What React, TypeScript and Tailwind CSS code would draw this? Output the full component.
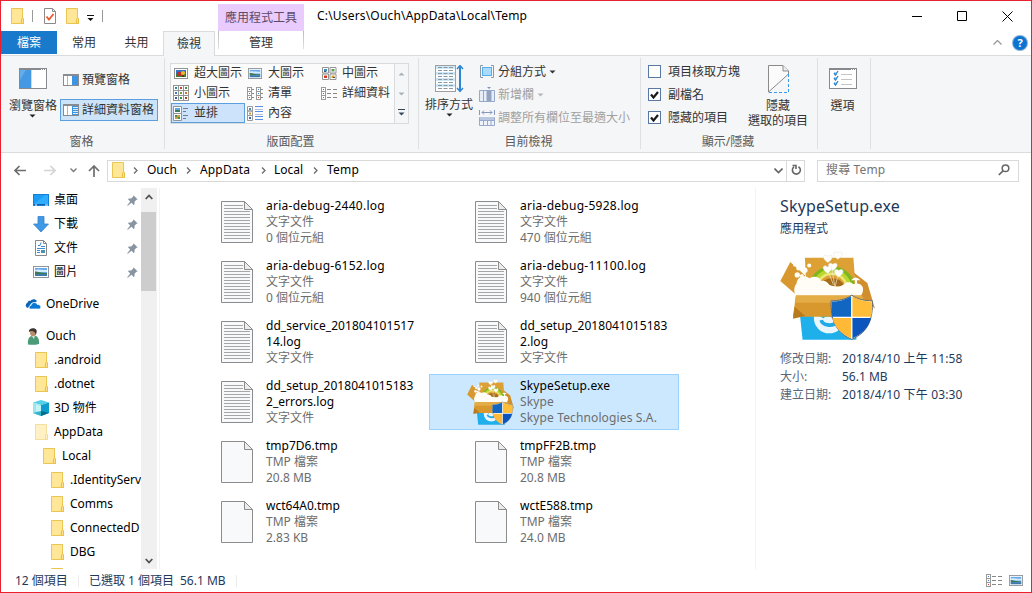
import React from "react";

type P = { className?: string };

const Folder = ({ className = "", pale = false }: P & { pale?: boolean }) => (
  <svg width="13" height="16" viewBox="0 0 13 16" className={"shrink-0 " + className} opacity={pale ? 0.55 : 1}>
    <path d="M.5.5h11v10h1v5H.5z" fill="#ffe38f" stroke="#eac54f" />
    <path d="M1 1h10v9L8 15H1z" fill="#ffe797" />
    <path d="M10.5 15.5v-4.500l1-.8 1 .8v4.500z" fill="#ffe38f" stroke="#e6bd3f" strokeWidth=".9" />
  </svg>
);

const Down = ({ className = "text-[#222]" }: P) => (
  <svg width="7" height="4" viewBox="0 0 7 4" className={"shrink-0 " + className}>
    <path d="M.5.5h6L3.500 3.500z" fill="currentColor" />
  </svg>
);

const Photo = ({ className = "", big = false }: P & { big?: boolean }) => (
  <svg width={big ? 16 : 14} height={big ? 12 : 11} viewBox="0 0 16 12" preserveAspectRatio="none" className={"shrink-0 " + className}>
    <rect x=".5" y=".5" width="15" height="11" fill="#fff" stroke="#8f9499" />
    <path d="M2 2h12v8H2z" fill="#68a9ec" />
    <path d="M2 4c3-1.500 7 .5 12 0v2H2z" fill="#d7ecfb" />
    <path d="M2 5.500c3 0 5 1.500 12 1.500v1H2z" fill="#41784e" />
    <path d="M2 8h12v2H2z" fill="#3e79ac" />
  </svg>
);

const PhotoXL = () => (
  <svg width="14" height="11" viewBox="0 0 14 11">
    <rect x=".5" y=".5" width="13" height="10" fill="#fff" stroke="#8f9499" />
    <path d="M2 2h10v7H2z" fill="#3b6fc4" />
    <path d="M2 6h10v3H2z" fill="#3f7a34" />
    <path d="M3 4h4v4H3z" fill="#b8322b" />
    <circle cx="9" cy="5" r="2.100" fill="#f0b82e" />
    <path d="M8 7h2v2H8z" fill="#6d3514" />
  </svg>
);

const Medium = () => (
  <svg width="15" height="13" viewBox="0 0 15 13" fill="#fff" stroke="#949494">
    <path d="M.5.5h6v5.500h-6zM8 .5h6v5.500H8zM.5 7h6v5.500h-6zM8 7h6v5.500H8z" />
    <g stroke="none">
      <path d="M2 2h3v2.500H2z" fill="#3c8fbf" /><path d="M9.500 2h3v2.500h-3z" fill="#5a9e58" />
      <path d="M2 8.500h3V11H2z" fill="#d23c22" /><path d="M9.500 8.500h3V11h-3z" fill="#d99c24" />
      <path d="M2 4h2v1H2zM11 10h2v1h-2z" fill="#34546b" />
    </g>
  </svg>
);

const Small = () => (
  <svg width="16" height="16" viewBox="0 0 16 16">
    {[0, 1, 2].map((r) => [0, 1, 2].map((c) => (
      <g key={r + "-" + c}>
        <rect x={c * 5 + 0.5} y={r * 5 + 0.5} width="5" height="5" fill="#fff" stroke="#949494" />
        <rect x={c * 5 + 2} y={r * 5 + 2} width="2" height="2" fill={["#2b8a9c", "#c4472d", "#4a8a3c", "#3b7ac0", "#7a9a34", "#d06c28", "#355f9c", "#3f8b4b", "#b23b30"][r * 3 + c]} />
      </g>
    )))}
  </svg>
);

const SmallCells = ({ x }: { x: number }) => (
  <g>
    {[0, 1, 2].map((r) => (
      <g key={r}>
        <rect x={x + 0.5} y={r * 4 + 0.5} width="4" height="4" fill="#fff" stroke="#999" />
        <rect x={x + 2} y={r * 4 + 2} width="1" height="1" fill={["#347fc4", "#3977c8", "#cf3d36"][r]} />
      </g>
    ))}
  </g>
);

const ListIcon = () => (
  <svg width="16" height="13" viewBox="0 0 16 13">
    <SmallCells x={0} /><SmallCells x={9} />
    <path d="M5 2.500h2M5 6.500h2M5 10.500h2M14 2.500h2M14 6.500h2M14 10.500h2" stroke="#888" />
  </svg>
);

const DetailIcon = () => (
  <svg width="16" height="13" viewBox="0 0 16 13" className="shrink-0">
    <SmallCells x={0} />
    <path d="M6 2.500h4M12 2.500h4M6 6.500h4M12 6.500h4M6 10.500h4M12 10.500h4" stroke="#888" />
  </svg>
);

const TilesIcon = () => (
  <svg width="16" height="15" viewBox="0 0 16 15">
    <path d="M.5.5h8v7h-8zM.5 7.500h8v7h-8z" fill="#fff" stroke="#949494" />
    <path d="M2 2h5v4H2z" fill="#5fa8da" /><path d="M2 4h5v2H2z" fill="#3d7d63" />
    <path d="M2 9h5v4H2z" fill="#cf9b3a" /><path d="M2 9h2v2H2zM5 11h2v2H5z" fill="#4b934b" />
    <path d="M10 2.500h5M10 5.500h3M10 9.500h5M10 12.500h3" stroke="#6e7f92" />
  </svg>
);

const ContentIcon = () => (
  <svg width="16" height="15" viewBox="0 0 16 15">
    <path d="M.5.500h5v4.500h-5zM.5 5h5v4.500h-5zM.5 9.500h5v5h-5z" fill="#fff" stroke="#999" />
    <path d="M2 2h2v2H2z" fill="#3f8fb8" /><path d="M2 6.500h2v2H2z" fill="#c9973a" /><path d="M2 11h2v2H2z" fill="#356cb0" />
    <path d="M8 .5h8M8 5.500h8M8 10.500h8M8 13.500h8" stroke="#5a8fe6" /><path d="M8 3.500h8M8 8.500h8" stroke="#b6c4dc" />
  </svg>
);

const NavPane = () => (
  <svg width="28" height="21" viewBox="0 0 28 21">
    <rect x=".5" y=".5" width="27" height="20" fill="#fff" stroke="#868a8e" />
    <path d="M1 1h26v1H1z" fill="#868a8e" /><path d="M22 1h1v1h-1zM24 1h1v1h-1zM26 1h1v1h-1z" fill="#fff" />
    <path d="M1 2h11v18H1z" fill="#4499e2" /><path d="M1 2h6L1 12z" fill="#62adea" />
    <path d="M12 2h1v18h-1z" fill="#d8d8d8" />
  </svg>
);

const SidePane = ({ lines = false }: { lines?: boolean }) => (
  <svg width="16" height="12" viewBox="0 0 16 12" className="shrink-0">
    <rect x=".5" y=".5" width="15" height="11" fill="#fff" stroke="#888c90" />
    <path d="M0 0h16v2H0z" fill="#888c90" />
    <path d="M4.500 2v9" stroke="#b5b5b5" />
    <path d="M9 2h6v9H9z" fill="#3d95e2" />
    {lines && <path d="M10 3.500h5M10 5.500h5M10 7.500h5M10 9.500h5" stroke="#d9edfc" />}
  </svg>
);

const SortIcon = () => (
  <svg width="29" height="28" viewBox="0 0 29 28">
    <rect x=".5" y=".5" width="20" height="26" fill="#fff" stroke="#a0a0a0" />
    <path d="M1 1h19v3H1zM1 7h19v3H1zM1 13h19v3H1zM1 19h19v3H1z" fill="#cde8f7" />
    {[2.5, 5.5, 8.5, 11.5, 14.5, 17.5, 20.5, 23.5].map((y) => (
      <path key={y} d={`M3 ${y}h4M8.500 ${y}h4M14 ${y}h4`} stroke="#8f979e" />
    ))}
    <path d="M25 2v23" stroke="#2d86d1" strokeWidth="2" />
    <path d="M22 4l3-3.500 3 3.500M22 23l3 3.500 3-3.500" stroke="#2d86d1" strokeWidth="1.400" fill="none" />
  </svg>
);

const GroupIcon = () => (
  <svg width="14" height="13" viewBox="0 0 14 13" className="shrink-0">
    <path d="M3 .5H.5v12H3M11 .5h2.500v12H11" fill="none" stroke="#8b98a5" />
    <rect x="2.500" y="2.500" width="9" height="8" fill="#a9dbff" stroke="#59aeea" />
  </svg>
);

const AddCol = () => (
  <svg width="16" height="15" viewBox="0 0 16 15" className="shrink-0">
    <path d="M.5 3.500h15v11H.5z" fill="#e8eef8" stroke="#98a8ca" />
    <path d="M4.500 3v11M8 3v11M12 3v11" stroke="#98a8ca" /><path d="M8 3h4v11H8z" fill="#93a3c4" />
    <path d="M8 0h4l-2 2z" fill="#7f90b5" />
  </svg>
);

const FitCol = () => (
  <svg width="16" height="16" viewBox="0 0 16 16" className="shrink-0">
    <path d="M.5 0v5M15.500 0v5M3 2.500h10M5 .5l-2 2 2 2M11 .5l2 2-2 2" stroke="#8497be" fill="none" />
    <path d="M.5 7.500h15v8H.5z" fill="#eff3fa" stroke="#98a8ca" /><path d="M1 7h14v3H1z" fill="#bac7e0" />
    <path d="M4.500 10v5M8.500 10v5M12 10v5M1 10.500h14" stroke="#98a8ca" />
  </svg>
);

const HideIcon = () => (
  <svg width="21" height="28" viewBox="0 0 21 28">
    <path d="M.5.5H15l5.500 5.500v3L.5 27z" fill="#fbfbfb" stroke="#8b8b8b" />
    <path d="M15 .5V6h5.500" fill="#eee" stroke="#8b8b8b" />
    <path d="M20.500 9v18.500H1" fill="none" stroke="#3a98e8" strokeDasharray="3 2" />
  </svg>
);

const OptionsIcon = () => (
  <svg width="28" height="21" viewBox="0 0 28 21">
    <rect x=".5" y=".5" width="27" height="20" fill="#fff" stroke="#868a8e" />
    <path d="M1 0h26v2H1z" fill="#868a8e" /><path d="M22 1h1v1h-1zM24 1h1v1h-1zM26 1h1v1h-1z" fill="#fff" />
    {[5, 10, 15].map((y) => (
      <g key={y}>
        <rect x="5" y={y - 1} width="3" height="3" fill="#b8ddf7" />
        <path d={`M5 ${y}l1.500 2L9 ${y - 2}`} fill="none" stroke="#2f86d3" strokeWidth="1.300" />
        <path d={`M12 ${y + 1.5}h11`} stroke="#c4c4c4" />
      </g>
    ))}
  </svg>
);

const Chev = ({ className = "" }: P) => (
  <svg width="5" height="7" viewBox="0 0 5 7" className={"shrink-0 " + className}>
    <path d="M1 .5l3 3-3 3" fill="none" stroke="#6a6a6a" strokeWidth="1.300" />
  </svg>
);

const Pin = () => (
  <svg width="11" height="11" viewBox="0 0 11 11" className="ml-auto shrink-0">
    <path d="M6.500.3l4.200 4.200-1.300.3-1.900 2 .1 2.300-.9.900-2.200-2.200L.7 10.700l-.5-.5 3-3.700L1 4.300l.9-.9 2.300.1 2-1.900z" fill="#8695a1" />
  </svg>
);

const Page = ({ lined = false }: { lined?: boolean }) => (
  <svg width="32" height="42" viewBox="0 0 32 42" className="shrink-0">
    <path d="M.5.5H23.500l8 8v33H.5z" fill="#f8f9fa" stroke="#8c8c8c" />
    {lined && (
      <g stroke="#a6a6a6">
        <path d="M3 4.500h19M3 7.500h19" />
        {[10.5, 13.5, 16.5, 19.5, 22.5, 25.5, 28.5, 31.5, 34.5, 37.5].map((y) => <path key={y} d={`M3 ${y}h26`} />)}
      </g>
    )}
    <path d="M23.500.5v8h8z" fill="#ececec" stroke="#8c8c8c" />
  </svg>
);

const SetupBox = ({ w, h, className = "" }: P & { w: number; h: number }) => (
  <svg width={w} height={h} viewBox="60 198 286 268" preserveAspectRatio="none" className={"shrink-0 " + className}>
    <path d="M120 390h170v75H128z" fill="#1fb0ec" />
    <circle cx="208" cy="400" r="46" fill="#e9f6fd" />
    <path d="M184 406c4 16 34 20 44 8M222 396c-8-10-30-8-36 2" fill="none" stroke="#1fa9e6" strokeWidth="11" />
    <path d="M91 231l44 40 4 60-28 1-50-44z" fill="#d9982f" />
    <path d="M135 218h146l8 110H140z" fill="#dda034" />
    <path d="M281 262l42 32 23 78-40-35z" fill="#d08f2c" />
    <path d="M152 300a66 66 0 0 1 128 0" fill="none" stroke="#7fb51e" strokeWidth="12" />
    <path d="M162 302a55 55 0 0 1 108 0" fill="none" stroke="#b9d72e" strokeWidth="10" />
    <path d="M171 303a46 46 0 0 1 90 0" fill="none" stroke="#e8ea72" strokeWidth="8" />
    <path d="M178 305a42 42 0 0 1 77 0z" fill="#a56b18" />
    <path d="M217 258l8 45M236 265l-10 40M203 255l18 45" stroke="#f4ead2" strokeWidth="2" />
    <g fill="#fffefa" stroke="#e2e2e2" strokeWidth="1.500">
      {[[204, 219], [234, 209], [219, 243], [237, 262], [203, 251]].map(([x, y]) => (
        <path key={x} d={`M${x} ${y + 14}c-22-14-12-29 0-19 12-10 22 5 0 19z`} />
      ))}
    </g>
    <g fill="#fffdf5">
      <circle cx="104" cy="241" r="4" /><circle cx="115" cy="251" r="6" /><circle cx="128" cy="237" r="6" /><circle cx="135" cy="256" r="8" />
      <circle cx="148" cy="242" r="6" /><circle cx="112" cy="270" r="8" /><circle cx="126" cy="273" r="6" />
      <path d="M108 334c-8-12-6-30 2-38 0-18 22-30 38-16 12-8 30-6 36 8 12-2 20 4 24 12 14 6 34 8 44-2 8-8 22-8 28 0 18-6 32 4 30 18-2 12-4 14-12 18z" />
      <path d="M274 286q14-16 28 0h-10v16h-6v-16z" />
    </g>
    <path d="M108 332h198l14 16 20 24-16 24H99z" fill="#d8982e" />
    <path d="M108 332h200l4 22H104z" fill="#e4ac44" />
    <path d="M104 366l32 28-37 8z" fill="#b87a1d" />
    <path d="M276 331c18 13 40 17 62 17 2 55-12 94-62 116-50-22-64-61-62-116 22 0 44-4 62-17z" fill="#fff" stroke="#5d6770" strokeWidth="3" />
    <path d="M274 334v62h-57c-2-16-2-31-1-46 22 0 41-5 58-16z" fill="#1166c2" />
    <path d="M278 334v62h57c2-16 2-31 1-46-22 0-41-5-58-16z" fill="#ffbd38" />
    <path d="M274 400v61c-31-13-50-34-56-61z" fill="#ffb936" />
    <path d="M278 400v61c31-13 50-34 56-61z" fill="#0b55bd" />
  </svg>
);

const Desktop = () => (
  <svg width="16" height="13" viewBox="0 0 16 13">
    <path d="M0 0h16v12H0z" fill="#1480d8" /><path d="M1 1h14v9H1z" fill="#1b9cf6" /><path d="M1 10L12 1h3v9z" fill="#31adff" />
    <path d="M1 10h14v1H1z" fill="#0d60ad" /><path d="M2 11h2M12 11h3" stroke="#fff" />
  </svg>
);
const Download = () => (
  <svg width="16" height="17" viewBox="0 0 16 17"><path d="M5 .5h6V8h4.500L8 16 .5 8H5z" fill="#4099e5" stroke="#2e83d2" strokeWidth=".8" /></svg>
);
const Doc = () => (
  <svg width="12" height="16" viewBox="0 0 12 16">
    <path d="M.5.5h8l3 3v12H.5z" fill="#fff" stroke="#888" /><path d="M8.500.5v3h3" fill="none" stroke="#888" />
    <path d="M3 5.500h2l1-3M6 6.500h4M2 8.500h8M2 10.500h3M2 12.500h3" stroke="#3a8dd0" fill="none" /><path d="M6 10h4v3H6z" fill="#4b8fae" />
  </svg>
);
const Cloud = () => (
  <svg width="16" height="10" viewBox="0 0 16 10">
    <path d="M3 9a2.700 2.700 0 0 1-.5-5.200C2.800 2 4.500 1.500 5.500 2 6.500 0 10.500-.8 12 2.500L6.500 4z" fill="#0a64b8" />
    <path d="M5.500 10C3.500 9.500 3.800 6.500 6 6.500 6.500 3 11 2.500 12.300 5.500c2-.3 3.700 1 3.500 2.700-.2 1-.8 1.800-1.800 1.800z" fill="#0b78d4" stroke="#fff" strokeWidth=".7" />
  </svg>
);
const User = () => (
  <svg width="13" height="17" viewBox="0 0 13 17">
    <path d="M1 16.500C.5 12 2 8 5 8l3-.5c3 1 4.500 4 4 8.500-3 1-8 1-11 .5z" fill="#4b9b76" />
    <path d="M4 7l3 4 1-4z" fill="#e8e8e8" /><ellipse cx="6" cy="4.500" rx="3" ry="3.800" fill="#b98e6c" />
    <path d="M2 4C1 0 8-1 9.500 2c.5 1.500 0 4-1 5C8.500 4.500 7 3 4 3z" fill="#3c3633" />
  </svg>
);
const Cube = () => (
  <svg width="16" height="16" viewBox="0 0 16 16">
    <path d="M0 2.500L8 0l8 2.500L8 5z" fill="#55d0e6" /><path d="M0 2.500L8 5v11l-8-3z" fill="#9be6f0" /><path d="M16 2.500L8 5v11l8-3z" fill="#0d9ccb" />
    <path d="M3 4.500L8 6v7l-5-2z" fill="#c7f2f6" /><path d="M8 16v-5l8 2z" fill="#056d8a" /><path d="M0 13l8-2v5z" fill="#33b5cc" />
  </svg>
);

const Check = ({ on = false, label }: { on?: boolean; label: string }) => (
  <div className="flex h-[23px] items-center">
    <span className="mr-[7px] flex h-[13px] w-[13px] items-center justify-center border border-[#5a78a6] bg-white">
      {on && <svg width="9" height="8" viewBox="0 0 9 8"><path d="M1 3.500l2.500 3L8 1" fill="none" stroke="#1a1a1a" strokeWidth="2.200" /></svg>}
    </span>
    {label}
  </div>
);

const GalleryItem = ({ icon, label, on = false }: { icon: React.ReactNode; label: string; on?: boolean }) => (
  <div className={"flex h-5 items-center border pl-px " + (on ? "border-[#5a9fe0] bg-[#cce3fb]" : "border-transparent")}>
    <span className="flex w-[16px] justify-center">{icon}</span>
    <span className="ml-[5px]">{label}</span>
  </div>
);

const GroupLabel = ({ children }: { children: React.ReactNode }) => (
  <div className="mt-auto h-[15px] pr-[2px] text-center text-[#5a5a5a]">{children}</div>
);

const NavRow = ({ pad, icon, label, pin = false, gap = false }: { pad: string; icon: React.ReactNode; label: string; pin?: boolean; gap?: boolean }) => (
  <div className={"flex h-6 shrink-0 items-center pr-[3px] " + pad + (gap ? " mt-2" : "")}>
    <span className="mr-[5px] flex w-4 shrink-0 justify-center">{icon}</span>
    <span>{label}</span>
    {pin && <Pin />}
  </div>
);

const files: { name: string[]; info: string[]; kind: "log" | "tmp" | "exe"; track?: string }[] = [
  { name: ["aria-debug-2440.log"], info: ["文字文件", "0 個位元組"], kind: "log", track: "tracking-[0.26px]" },
  { name: ["aria-debug-5928.log"], info: ["文字文件", "470 個位元組"], kind: "log", track: "tracking-[0.26px]" },
  { name: ["aria-debug-6152.log"], info: ["文字文件", "0 個位元組"], kind: "log", track: "tracking-[0.26px]" },
  { name: ["aria-debug-11100.log"], info: ["文字文件", "940 個位元組"], kind: "log", track: "tracking-[0.26px]" },
  { name: ["dd_service_201804101517", "14.log"], info: ["文字文件"], kind: "log", track: "tracking-[0.05px]" },
  { name: ["dd_setup_2018041015183", "2.log"], info: ["文字文件"], kind: "log", track: "tracking-[0.05px]" },
  { name: ["dd_setup_2018041015183", "2_errors.log"], info: ["文字文件"], kind: "log", track: "tracking-[0.05px]" },
  { name: ["SkypeSetup.exe"], info: ["Skype", "Skype Technologies S.A."], kind: "exe", track: "tracking-[0.13px]" },
  { name: ["tmp7D6.tmp"], info: ["TMP 檔案", "20.8 MB"], kind: "tmp" },
  { name: ["tmpFF2B.tmp"], info: ["TMP 檔案", "20.8 MB"], kind: "tmp" },
  { name: ["wct64A0.tmp"], info: ["TMP 檔案", "2.83 KB"], kind: "tmp" },
  { name: ["wctE588.tmp"], info: ["TMP 檔案", "24.0 MB"], kind: "tmp" },
];

export default function App() {
  return (
    <div className="flex h-[593px] w-[1032px] flex-col overflow-hidden whitespace-nowrap border border-[#e9202f] bg-white font-['Noto_Sans','Noto_Sans_CJK_TC',sans-serif] text-[12px] leading-4 text-[#333]">
      {/* title bar */}
      <div className="flex h-[30px] shrink-0 items-center pl-[10px] pr-[18px]">
        <Folder />
        <i className="ml-2 h-3 w-px bg-[#999]" />
        <svg width="12" height="16" viewBox="0 0 12 16" className="ml-[11px]">
          <path d="M.5.500h8l3 3v12H.5z" fill="#fff" stroke="#8a8a8a" /><path d="M8.500.5v3h3" fill="none" stroke="#8a8a8a" />
          <path d="M2.500 8.500l2.500 3 4.500-5.500" fill="none" stroke="#e8592b" strokeWidth="1.800" />
        </svg>
        <Folder className="ml-[10px]" />
        <svg width="7" height="6" viewBox="0 0 7 6" className="ml-2 mt-1"><path d="M0 0h7v1H0zM.5 3h6l-3 3z" fill="#111" /></svg>
        <i className="ml-2 h-3 w-px bg-[#999]" />
        <div className="ml-[115px] mt-[3px] flex h-[27px] w-[86px] items-center justify-center bg-[#e9cbfd] text-[#5b4a66]">應用程式工具</div>
        <span className="ml-[13px] tracking-[0.18px] text-black">C:\Users\Ouch\AppData\Local\Temp</span>
        <svg width="101" height="11" viewBox="0 0 101 11" className="ml-auto" fill="none" stroke="#000">
          <path d="M0 5.500h10M45.500.5h9v9h-9zM90.500.5l10 10M100.500.5l-10 10" />
        </svg>
      </div>
      {/* tabs */}
      <div className="flex h-6 shrink-0 text-[#333]">
        <div className="flex h-[23px] w-14 items-center justify-center bg-[#1979ca] text-white">檔案</div>
        <div className="flex h-[23px] w-[53px] items-center justify-center pl-px">常用</div>
        <div className="flex h-[23px] w-[53px] items-center justify-center">共用</div>
        <div className="z-10 flex h-[25px] w-[52px] items-center justify-center border border-b-0 border-[#dadbdc] bg-[#f5f6f7] pb-px">檢視</div>
        <div className="ml-[3px] flex h-[23px] w-[86px] justify-between">
          <i className="h-[18px] w-px bg-linear-to-b from-[#bbb] to-[#e4e4e4]" />
          <span className="self-center">管理</span>
          <i className="h-[18px] w-px bg-linear-to-b from-[#bbb] to-[#e4e4e4]" />
        </div>
        <svg width="9" height="5" viewBox="0 0 9 5" className="ml-auto mt-[9px]"><path d="M.5 4.500l4-4 4 4" fill="none" stroke="#999" strokeWidth="1.300" /></svg>
        <span className="ml-[11px] mr-[4px] mt-[5px] flex h-[14px] w-[14px] items-center justify-center rounded-full bg-[#0b74d1] text-[11px] font-bold text-white ring-1 ring-[#3a7db8]/60">?</span>
      </div>
      {/* ribbon */}
      <div className="flex h-[98px] shrink-0 border-y border-[#dadbdc] bg-[#f5f6f7] pb-[3px] pt-[2px]">
        <div className="flex w-[164px] flex-col border-r border-[#dfe0e1]">
          <div className="flex">
            <div className="flex w-[58px] flex-col items-center pl-[5px] pt-[10px]">
              <NavPane />
              <span className="ml-px mt-[9px]">瀏覽窗格</span>
              <Down />
            </div>
            <div className="ml-px pt-[10px]">
              <div className="flex h-[23px] items-center gap-[3px] pl-[3px]"><SidePane />預覽窗格</div>
              <div className="mt-2 flex h-[22px] w-[98px] items-center gap-[3px] border border-[#5a9fe0] bg-[#cce3f8] pl-[2px]"><SidePane lines />詳細資料窗格</div>
            </div>
          </div>
          <GroupLabel>窗格</GroupLabel>
        </div>

        <div className="flex w-[254px] flex-col border-r border-[#dfe0e1]">
          <div className="ml-[5px] mt-[5px] flex h-[61px] w-[239px] border border-[#dadbdc] bg-[#fbfbfc]">
            <div className="-mt-px grid w-[223px] grid-cols-[74px_74px_75px] content-start">
              <GalleryItem icon={<PhotoXL />} label="超大圖示" />
              <GalleryItem icon={<Photo />} label="大圖示" />
              <GalleryItem icon={<Medium />} label="中圖示" />
              <GalleryItem icon={<Small />} label="小圖示" />
              <GalleryItem icon={<ListIcon />} label="清單" />
              <GalleryItem icon={<DetailIcon />} label="詳細資料" />
              <GalleryItem icon={<TilesIcon />} label="並排" on />
              <GalleryItem icon={<ContentIcon />} label="內容" />
            </div>
            <div className="flex flex-1 flex-col items-center border-l border-[#dadbdc] bg-[#f5f6f7]">
              <Down className="mt-2 rotate-180 text-[#a8b0ba]" />
              <Down className="mt-4 text-[#a8b0ba]" />
              <i className="mt-[13px] h-px w-[7px] bg-[#33475c]" />
              <Down className="mt-[2px] text-[#33475c]" />
            </div>
          </div>
          <GroupLabel>版面配置</GroupLabel>
        </div>

        <div className="flex w-[222px] flex-col border-r border-[#dfe0e1]">
          <div className="flex">
            <div className="flex w-[60px] flex-col items-center pt-[7px]">
              <SortIcon />
              <span className="mt-1">排序方式</span>
              <Down />
            </div>
            <div className="pt-[2px] text-[#a0a0a0]">
              <div className="flex h-[23px] items-center text-[#333]"><span className="mr-[3px] flex w-4 justify-center"><GroupIcon /></span>分組方式<Down className="ml-[3px]" /></div>
              <div className="flex h-[23px] items-center"><span className="mr-[3px]"><AddCol /></span>新增欄<Down className="ml-[3px] text-[#b5b5b5]" /></div>
              <div className="flex h-[23px] items-center"><span className="mr-[3px]"><FitCol /></span>調整所有欄位至最適大小</div>
            </div>
          </div>
          <GroupLabel>目前檢視</GroupLabel>
        </div>

        <div className="flex w-[177px] flex-col border-r border-[#dfe0e1]">
          <div className="flex">
            <div className="w-[107px] pl-[7px] pt-[2px]">
              <Check label="項目核取方塊" />
              <Check on label="副檔名" />
              <Check on label="隱藏的項目" />
            </div>
            <div className="flex w-[60px] flex-col items-center pt-[7px] leading-[15px]">
              <HideIcon />
              <span className="mt-[5px]">隱藏</span>
              <span>選取的項目</span>
            </div>
          </div>
          <GroupLabel>顯示/隱藏</GroupLabel>
        </div>

        <div className="flex w-[53px] flex-col items-center border-r border-[#dfe0e1] pr-[3px] pt-[10px]">
          <OptionsIcon />
          <span className="mt-[9px]">選項</span>
        </div>
      </div>
      {/* address bar */}
      <div className="flex h-[35px] shrink-0 items-center pl-[13px] text-black">
        <svg width="12" height="11" viewBox="0 0 12 11"><path d="M12 5.500H1M5.500 1L1 5.500 5.500 10" fill="none" stroke="#6e6e6e" strokeWidth="1.700" /></svg>
        <svg width="12" height="11" viewBox="0 0 12 11" className="ml-[18px]"><path d="M0 5.500h11M6.500 1L11 5.500 6.500 10" fill="none" stroke="#d4d4d4" strokeWidth="1.700" /></svg>
        <svg width="7" height="5" viewBox="0 0 7 5" className="ml-[14px]"><path d="M.5.500l3 3 3-3" fill="none" stroke="#777" strokeWidth="1.300" /></svg>
        <svg width="12" height="12" viewBox="0 0 12 12" className="ml-[11px]"><path d="M6 12V1M1 6l5-5 5 5" fill="none" stroke="#6e6e6e" strokeWidth="1.700" /></svg>
        <div className="ml-[7px] flex h-[22px] w-[698px] items-center border border-[#d9d9d9] pb-px pl-1">
          <Folder />
          <Chev className="ml-2" />
          <span className="ml-[9px] w-[32px]">Ouch</span>
          <Chev className="ml-[7px]" />
          <span className="ml-[9px] w-[54px] tracking-[0.15px]">AppData</span>
          <Chev className="ml-[7px]" />
          <span className="ml-[8px] w-[32px]">Local</span>
          <Chev className="ml-[7px]" />
          <span className="ml-[9px] tracking-[0.2px]">Temp</span>
          <svg width="9" height="6" viewBox="0 0 9 6" className="ml-auto mt-px"><path d="M.5.500l4 4 4-4" fill="none" stroke="#666" strokeWidth="1.600" /></svg>
          <i className="-mb-px ml-[3px] h-5 w-px bg-[#d9d9d9]" />
          <svg width="11" height="12" viewBox="0 0 11 12" className="ml-1 mr-[2px]"><path d="M7.500 2.700a4 4 0 1 1-4.500.2M1.500 1.500h3.500V5" fill="none" stroke="#666" strokeWidth="1.600" /></svg>
        </div>
        <div className="ml-3 flex h-[22px] w-[202px] items-center border border-[#d9d9d9] pb-px pl-2 pr-2 text-[#757575]">
          <span className="tracking-[0.15px]">搜尋 Temp</span>
          <svg width="12" height="12" viewBox="0 0 12 12" className="ml-auto"><circle cx="7.500" cy="4.300" r="3.300" fill="none" stroke="#666" strokeWidth="1.500" /><path d="M5 6.800L.8 11" stroke="#666" strokeWidth="1.700" /></svg>
        </div>
      </div>
      {/* body */}
      <div className="flex h-[381px] shrink-0 text-black">
        <div className="flex w-[140px] flex-col overflow-hidden">
          <NavRow pad="pl-8" icon={<Desktop />} label="桌面" pin />
          <NavRow pad="pl-8" icon={<Download />} label="下載" pin />
          <NavRow pad="pl-8" icon={<Doc />} label="文件" pin />
          <NavRow pad="pl-8" icon={<Photo big />} label="圖片" pin />
          <NavRow pad="pl-6" icon={<Cloud />} label="OneDrive" gap />
          <NavRow pad="pl-6" icon={<User />} label="Ouch" gap />
          <NavRow pad="pl-8" icon={<Folder />} label=".android" />
          <NavRow pad="pl-8" icon={<Folder />} label=".dotnet" />
          <NavRow pad="pl-8" icon={<Cube />} label="3D 物件" />
          <NavRow pad="pl-8" icon={<Folder pale />} label="AppData" />
          <NavRow pad="pl-10" icon={<Folder />} label="Local" />
          <NavRow pad="pl-12" icon={<Folder />} label=".IdentityServ" />
          <NavRow pad="pl-12" icon={<Folder />} label="Comms" />
          <NavRow pad="pl-12" icon={<Folder />} label="ConnectedD" />
          <NavRow pad="pl-12" icon={<Folder />} label="DBG" />
          <NavRow pad="pl-12" icon={<Folder />} label="" />
        </div>
        <div className="flex w-4 flex-col items-center bg-[#f0f0f0]">
          <svg width="8" height="6" viewBox="0 0 8 6" className="mt-[6px]"><path d="M.7 5L4 1.500 7.300 5" fill="none" stroke="#505050" strokeWidth="1.800" /></svg>
          <i className="mt-3 h-[79px] w-[15px] self-start bg-[#cdcdcd]" />
          <svg width="8" height="6" viewBox="0 0 8 6" className="mb-[5px] mt-auto"><path d="M.7 1L4 4.500 7.300 1" fill="none" stroke="#505050" strokeWidth="1.800" /></svg>
        </div>
        <i className="ml-[2px] w-px bg-[#f3f3f3]" />
        <div className="grid w-[596px] grid-cols-[250px_250px] grid-rows-[repeat(6,56px)] content-start gap-1 border-r border-[#f3f3f3] pl-[15px] pt-[6px]">
          {files.map((f, i) => (
            <div key={i} className={"flex border " + (f.kind === "exe" ? "border-[#99d1ff] bg-[#cce8ff] pl-[37px]" : "border-transparent pl-[45px]")}>
              {f.kind === "exe" ? <SetupBox w={47} h={46} className="mt-[4px]" /> : <span className="mt-[6px]"><Page lined={f.kind === "log"} /></span>}
              <div className={"pt-[3px] " + (f.kind === "exe" ? "ml-[6px]" : "ml-[13px]")}>
                {f.name.map((n) => <div key={n} className={f.track ?? ""}>{n}</div>)}
                {f.info.map((n) => <div key={n} className={"text-[#6d6d6d] " + (f.kind === "exe" ? "tracking-[0.13px]" : "")}>{n}</div>)}
              </div>
            </div>
          ))}
        </div>
        <div className="flex-1 pl-[24px] text-[#1e395b]">
          <div className="mt-[7px] text-[16px] leading-[22px] tracking-[0.15px]">SkypeSetup.exe</div>
          <div className="mt-[4px]">應用程式</div>
          <SetupBox w={95} h={89} className="mt-[14px]" />
          <dl className="mt-[10px] grid grid-cols-[62px_1fr] leading-[18px]">
            <dt className="text-[#5a6779]">修改日期:</dt><dd className="tracking-[0.15px]">2018/4/10 上午 11:58</dd>
            <dt className="text-[#5a6779]">大小:</dt><dd>56.1 MB</dd>
            <dt className="text-[#5a6779]">建立日期:</dt><dd className="tracking-[0.15px]">2018/4/10 下午 03:30</dd>
          </dl>
        </div>
      </div>
      {/* status bar */}
      <div className="flex h-[22px] items-center pl-[14px] pr-[8px] pt-px text-[#1e395b]">
        <span className="w-[63px]">12 個項目</span>
        <i className="h-3 w-px bg-[#ececec]" />
        <span className="ml-[10px] w-[91px]">已選取 1 個項目</span>
        <span className="w-[56px]">56.1 MB</span>
        <i className="h-3 w-px bg-[#ececec]" />
        <span className="ml-auto"><DetailIcon /></span>
        <Photo className="ml-[7px]" />
      </div>
    </div>
  );
}
